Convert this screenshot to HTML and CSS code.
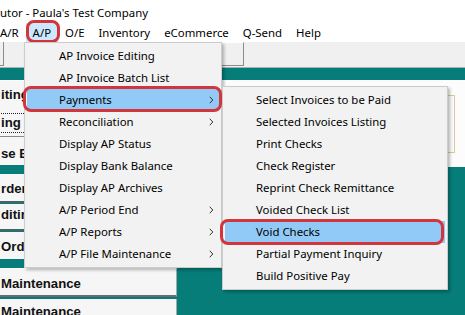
FILE: index.html
```html
<!DOCTYPE html>
<html>
<head>
    <title>Distributor - A/P Menu</title>
    <link rel="stylesheet" href="styles.css">
</head>
<body>
<div class="window">
    <div class="titlebar">utor - Paula's Test Company</div>

    <div class="menubar">
        <span class="mb-item first">A/R</span>
        <span class="mb-item open">A/P</span>
        <span class="mb-item">O/E</span>
        <span class="mb-item">Inventory</span>
        <span class="mb-item">eCommerce</span>
        <span class="mb-item">Q-Send</span>
        <span class="mb-item">Help</span>
    </div>

    <div class="toolbar">
        <div class="tb-btn tb-edge"></div>
        <div class="tb-btn tb-last"></div>
    </div>
    <div class="tealbar"></div>

    <div class="main">
        <div class="side">
            <div class="sbtn b1">iting</div>
            <div class="sbtn b2"><span class="focus">ing</span></div>
            <div class="sbtn b3">se Entry</div>
            <div class="sgap"></div>
            <div class="sbtn b4 split">rder</div>
            <div class="sbtn b5 split">diting</div>
            <div class="sbtn b6">Orders</div>
            <div class="sgap"></div>
            <div class="sbtn b7">Maintenance</div>
            <div class="sbtn b8">Maintenance</div>
        </div>
        <div class="content">
            <div class="panel">
                <div class="field"></div>
            </div>
        </div>
    </div>

    <!-- A/P dropdown -->
    <div class="menu ap-menu">
        <div class="mi">AP Invoice Editing</div>
        <div class="mi">AP Invoice Batch List</div>
        <div class="mi hot marked">Payments <svg class="chev" width="5" height="8" viewBox="0 0 5 8"><path d="M0.8 0.8 L3.8 4 L0.8 7.2" /></svg></div>
        <div class="mi">Reconciliation <svg class="chev" width="5" height="8" viewBox="0 0 5 8"><path d="M0.8 0.8 L3.8 4 L0.8 7.2" /></svg></div>
        <div class="mi">Display AP Status</div>
        <div class="mi">Display Bank Balance</div>
        <div class="mi">Display AP Archives</div>
        <div class="mi">A/P Period End <svg class="chev" width="5" height="8" viewBox="0 0 5 8"><path d="M0.8 0.8 L3.8 4 L0.8 7.2" /></svg></div>
        <div class="mi">A/P Reports <svg class="chev" width="5" height="8" viewBox="0 0 5 8"><path d="M0.8 0.8 L3.8 4 L0.8 7.2" /></svg></div>
        <div class="mi">A/P File Maintenance <svg class="chev" width="5" height="8" viewBox="0 0 5 8"><path d="M0.8 0.8 L3.8 4 L0.8 7.2" /></svg></div>
    </div>

    <!-- Payments submenu -->
    <div class="menu pay-menu">
        <div class="mi">Select Invoices to be Paid</div>
        <div class="mi">Selected Invoices Listing</div>
        <div class="mi">Print Checks</div>
        <div class="mi">Check Register</div>
        <div class="mi">Reprint Check Remittance</div>
        <div class="mi">Voided Check List</div>
        <div class="mi hot marked void">Void Checks</div>
        <div class="mi">Partial Payment Inquiry</div>
        <div class="mi">Build Positive Pay</div>
    </div>
</div>
</body>
</html>
```

FILE: styles.css
```css
body { margin: 0; font-family: "Noto Sans", "Open Sans", sans-serif; font-size: 11.4px; color: #000; background: #fff; }
.window { position: relative; width: 465px; height: 315px; overflow: hidden; background: #fff; }

.titlebar { height: 23px; padding-top: 3px; box-sizing: border-box; line-height: 20px; white-space: nowrap; }

.menubar { display: flex; height: 19px; line-height: 19px; white-space: nowrap; }
.mb-item { padding: 0 7px; position: relative; }
.mb-item.first { padding-left: 0; }
.mb-item.open { background: #cce8ff; }
.mb-item.open::after { content: ""; position: absolute; top: -3px; bottom: -1px; left: 0; right: -2px; border: 3.5px solid #d2353b; border-radius: 8px; }

.toolbar { display: flex; height: 26px; box-sizing: border-box; background: #f0f0f0; border-bottom: 1px solid #9fb5b3; }
.tb-btn { height: 24px; box-sizing: border-box; border-right: 1px solid #8c8c8c; border-bottom: 1px solid #8c8c8c; }
.tb-edge { width: 4px; }
.tb-last { width: 60px; margin-left: 180px; border-top: 1px solid #fff; border-left: 1px solid #fff; }
.tealbar { height: 12px; background: #067d79; }

.main { display: flex; height: 235px; box-sizing: border-box; background: #067d79; border-top: 1px solid #fff; overflow: hidden; }
.side { width: 177px; display: flex; flex-direction: column; }
.side > div { flex-shrink: 0; }
.sbtn { background: #f6f6f6; font-family: "Liberation Sans", Arial, sans-serif; font-weight: bold; font-size: 13.2px; color: #111; line-height: 22px; padding-left: 1px; box-sizing: border-box; border-right: 1px solid #a7a7a7; white-space: nowrap; overflow: hidden; }
.b1 { height: 30px; line-height: 27px; }
.b2 { height: 26px; padding-top: 2px; border-bottom: 1px solid #8a8a8a; }
.b2 .focus { display: block; height: 20px; box-sizing: border-box; line-height: 18px; border-top: 1px dotted #222; border-bottom: 1px dotted #222; }
.b3 { height: 28px; padding-top: 6px; }
.sgap { height: 9px; }
.b4 { height: 29px; padding-top: 4px; }
.b5 { height: 27px; }
.b6 { height: 27px; padding-top: 4px; }
.split { border-bottom: 2px solid #4f6160; margin-bottom: 1px; }
.b7 { height: 29px; padding-top: 4px; border-bottom: 2px solid #6c6c6c; margin-bottom: 2px; border-top: 1px solid #fff; }
.b8 { height: 30px; padding-top: 2px; }

.content { flex: 1; }
.panel { height: 86px; background: #fcfcfc; padding-top: 14px; box-sizing: border-box; display: flex; justify-content: flex-end; }
.field { width: 200px; height: 58px; margin-right: 10px; box-sizing: border-box; border: 1px solid #d6c99c; background: #fafafa; }

.menu { position: absolute; background: #f2f2f2; border: 1px solid #cccccc; padding: 2px; box-sizing: border-box; box-shadow: 2px 2px 3px rgba(0,0,0,0.28); white-space: nowrap; }
.ap-menu { left: 24px; top: 42px; width: 198px; }
.pay-menu { left: 222px; top: 86px; width: 226px; }
.mi { position: relative; height: 22px; line-height: 22px; padding-left: 32px; padding-right: 5px; display: flex; align-items: center; justify-content: space-between; }
.pay-menu .mi { padding-left: 31px; }
.mi.hot { background: #91c9f7; }
.mi.marked::after { content: ""; position: absolute; top: -3px; bottom: -1px; left: -4px; right: -3px; border: 3.5px solid #d2353b; border-radius: 8px; }
.mi.void::after { top: -2px; bottom: -2px; left: -5px; right: 1px; }
.chev path { fill: none; stroke: #333; stroke-width: 1; }
```
